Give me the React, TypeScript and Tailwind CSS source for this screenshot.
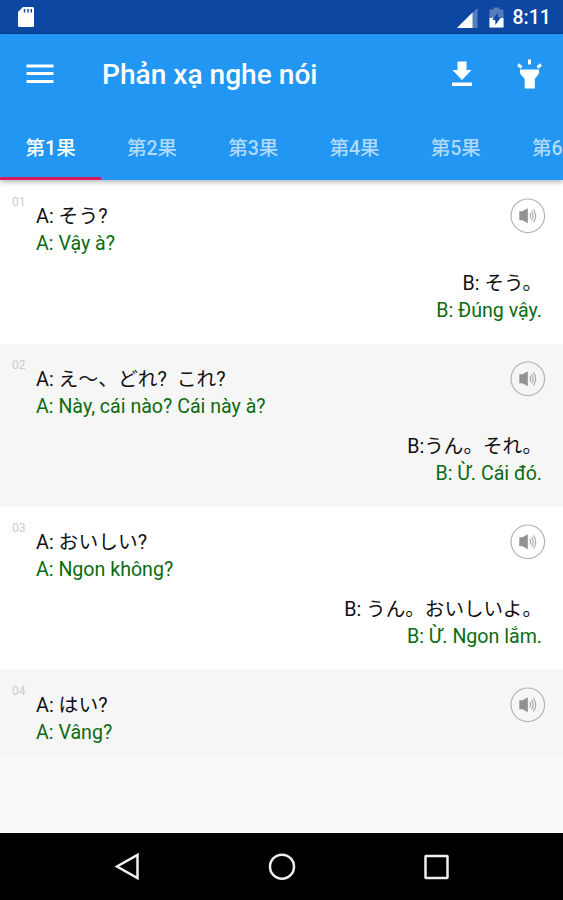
const lessons = ['第1果', '第2果', '第3果', '第4果', '第5果', '第6果'];

type Entry = { no: string; a: [string, string]; b?: [string, string] };

const entries: Entry[] = [
  { no: '01', a: ['A: そう?', 'A: Vậy à?'], b: ['B: そう。', 'B: Đúng vậy.'] },
  { no: '02', a: ['A: え〜、どれ?  これ?', 'A: Này, cái nào? Cái này à?'], b: ['B:うん。それ。', 'B: Ừ. Cái đó.'] },
  { no: '03', a: ['A: おいしい?', 'A: Ngon không?'], b: ['B: うん。おいしいよ。', 'B: Ừ. Ngon lắm.'] },
  { no: '04', a: ['A: はい?', 'A: Vâng?'] },
];

function StatusBar() {
  return (
    <div className="flex h-[34px] shrink-0 items-center border-b border-[#0b3c8c] bg-[#0d47a1] pr-3 pl-[17px] text-white">
      <svg width="18" height="22" viewBox="0 0 18 22">
        <path d="M6 1H15.5Q17 1 17 2.5V19.5Q17 21 15.5 21H2.500Q1 21 1 19.500V6Z" fill="#fff" />
        <path d="M7.500 3V6.500M11 3V6.500M14.300 3V6.500" stroke="#0d47a1" strokeWidth="1.500" />
      </svg>
      <svg className="mt-[3px] ml-auto" width="21" height="20" viewBox="0 0 21 20">
        <path d="M20.500 0V20H0Z" fill="#fff" opacity=".3" />
        <path d="M15.500 4.500V20H0Z" fill="#fff" />
      </svg>
      <svg className="mt-0.5 ml-[11px]" width="15" height="21" viewBox="0 0 15 21">
        <path d="M4.500 0.500H10.500V2.500H14.500V20.500H0.500V2.500H4.500Z" fill="#fff" opacity=".3" />
        <path d="M0.500 11H14.500V20.500H0.500Z" fill="#fff" />
        <path d="M9 5.500V10.500H12L6.300 18V13H3.300Z" fill="#0d47a1" />
      </svg>
      <span className="mt-[3px] ml-[9px] w-[38.500px] text-[19.500px] leading-none font-medium whitespace-nowrap">8:11</span>
    </div>
  );
}

function AppBar() {
  return (
    <div className="flex h-20 items-center pr-[21px] pl-[26px] text-white">
      <svg className="-mt-px" width="28" height="20" viewBox="0 0 28 20">
        <path d="M0.500 2H27.500M0.500 9.500H27.500M0.500 17.500H27.500" stroke="#fff" strokeWidth="3" />
      </svg>
      <h1 className="mt-[3px] ml-12 text-[28.100px] leading-none font-medium whitespace-nowrap">Phản xạ nghe nói</h1>
      <svg className="-mt-px ml-auto" width="22" height="26" viewBox="0 0 22 26">
        <path d="M6.500 0.500H15.500V9H20.500L11 19L1.500 9H6.500ZM1 21.500H21V25H1Z" fill="#fff" />
      </svg>
      <svg className="-mt-px ml-[44.500px]" width="25" height="30" viewBox="0 0 25 30">
        <path d="M3 10.500H22V14.500L17.800 20V29.500H7.700V20L3 14.500Z" fill="#fff" />
        <path d="M12.500 0.500V5.500M1 5.500L4.500 8.500M24 5.500L20.500 8.500" stroke="#fff" strokeWidth="3" />
      </svg>
    </div>
  );
}

function Tabs() {
  return (
    <div className="flex h-[66px] overflow-hidden">
      {lessons.map((name, i) => (
        <div
          key={name}
          className={`flex w-[101.300px] shrink-0 items-center justify-center border-b-[3px] pt-[6px] text-[19.500px] font-medium whitespace-nowrap ${
            i === 0 ? 'border-[#d81b60] text-white' : 'border-transparent text-[#b0d9fb]'
          }`}
        >
          {name}
        </div>
      ))}
    </div>
  );
}

function Speaker() {
  return (
    <svg className="-mt-px shrink-0" width="36" height="36" viewBox="0 0 36 36" fill="none">
      <circle cx="17.800" cy="17.800" r="16.800" stroke="#b3b3b3" strokeWidth="1.200" />
      <path d="M9.300 13.300H12.500L17.800 10.300V25.300L12.500 22.300H9.300Z" fill="#929292" />
      <path d="M19.800 15Q21.500 17.800 19.800 20.500M21.500 13Q24.800 17.800 21.500 22.500M23.500 11.300Q27.800 17.800 23.500 24.300" stroke="#a9a9a9" strokeWidth="1.200" />
    </svg>
  );
}

function Row({ entry, shaded }: { entry: Entry; shaded: boolean }) {
  return (
    <div className={`${entry.b ? 'h-[163px]' : 'h-[87px]'} flex flex-col pt-[18px] pr-[17px] pl-3 ${shaded ? 'bg-[#f6f6f6]' : 'bg-white'}`}>
      <div className="flex h-[57px] items-start">
        <span className="-mt-1 w-6 text-[12px] leading-[14px] text-[#cccccc]">{entry.no}</span>
        <div className="grow pt-1 leading-[27px] whitespace-pre">
          <p className="h-[27px] text-[19.800px] text-[#111]">{entry.a[0]}</p>
          <p className="text-[19.600px] text-[#0a6b12]">{entry.a[1]}</p>
        </div>
        <Speaker />
      </div>
      {entry.b && (
        <div className="mt-[14px] pr-1 text-right leading-[27px] whitespace-pre">
          <p className="h-[27px] text-[19.600px] text-[#111]">{entry.b[0]}</p>
          <p className="text-[19.600px] text-[#0a6b12]">{entry.b[1]}</p>
        </div>
      )}
    </div>
  );
}

export default function App() {
  return (
    <div lang="ja" className="flex h-[900px] w-[563px] flex-col overflow-hidden bg-[#fafafa] font-[Roboto,'Noto_Sans_CJK_JP',sans-serif]">
      <StatusBar />
      <header className="z-10 shrink-0 bg-[#2196f3] shadow-[0_2px_5px_rgba(0,0,0,0.3)]">
        <AppBar />
        <Tabs />
      </header>
      <main className="grow border-t border-white">
        {entries.map((entry, i) => (
          <Row key={entry.no} entry={entry} shaded={i % 2 === 1} />
        ))}
      </main>
      <nav className="flex h-[67px] shrink-0 items-center justify-between bg-black pr-[113px] pl-[113px]">
        <svg width="28" height="30" viewBox="0 0 28 30">
          <path d="M24.500 3V26L4 14.500Z" fill="none" stroke="#eee" strokeWidth="2.500" />
        </svg>
        <svg width="28" height="28" viewBox="0 0 28 28">
          <circle cx="14" cy="13.700" r="12" fill="none" stroke="#eee" strokeWidth="2.500" />
        </svg>
        <svg width="28" height="28" viewBox="0 0 28 28">
          <rect x="3.500" y="3" width="22" height="22" rx=".5" fill="none" stroke="#eee" strokeWidth="2.500" />
        </svg>
      </nav>
    </div>
  );
}
